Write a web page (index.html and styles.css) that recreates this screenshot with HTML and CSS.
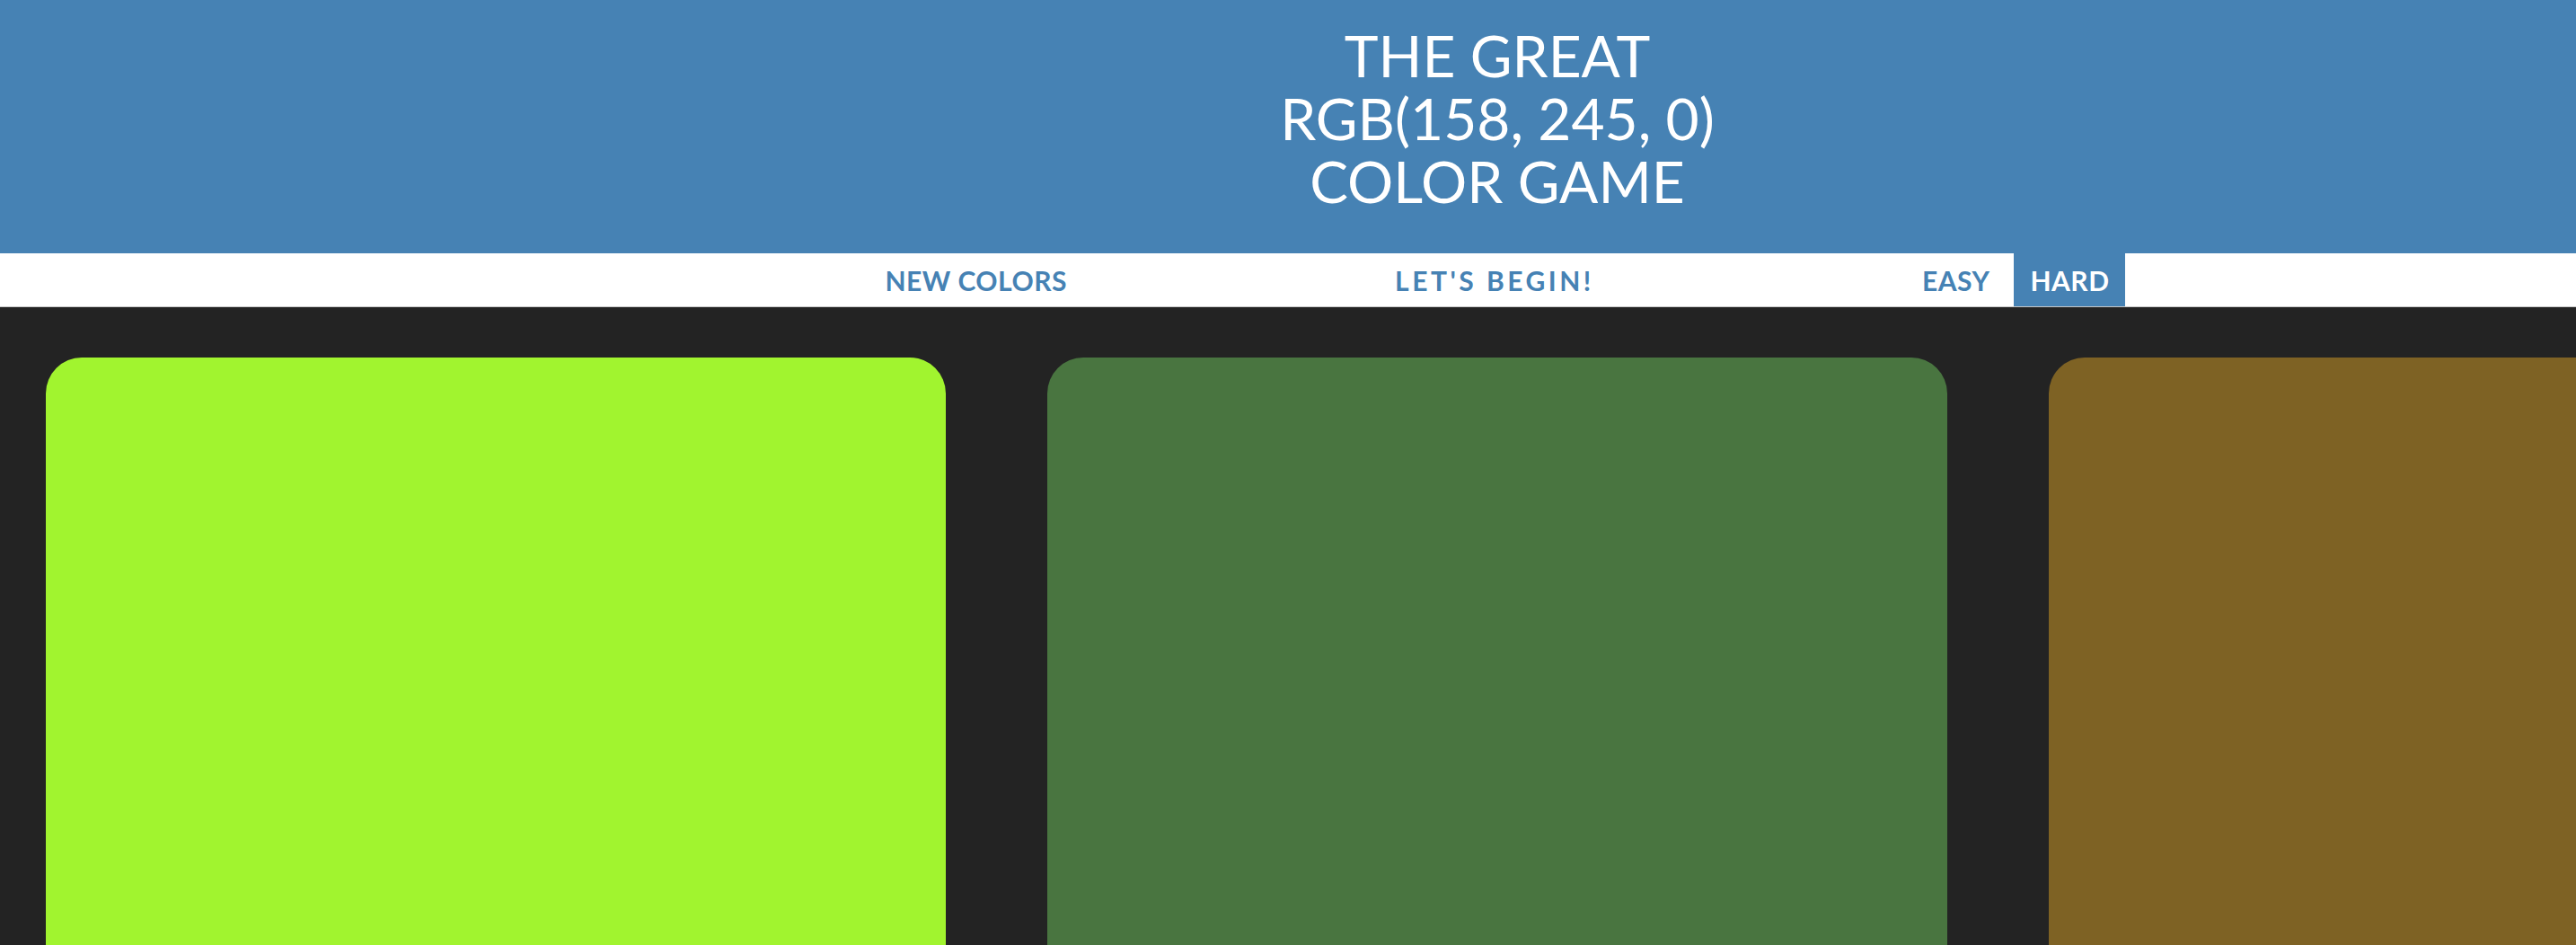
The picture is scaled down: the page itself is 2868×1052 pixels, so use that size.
FILE: index.html
```html
<!DOCTYPE html>
<html lang="en">
<head>
<meta charset="utf-8">
<title>Color Game</title>
<link rel="stylesheet" href="styles.css">
</head>
<body>
<div class="page">
  <h1 class="title">
    <span class="title-line">The Great</span>
    <span class="title-line">RGB(158, 245, 0)</span>
    <span class="title-line">Color Game</span>
  </h1>
  <nav class="stripe">
    <button class="btn">New Colors</button>
    <span class="message">Let's Begin!</span>
    <button class="btn">Easy</button>
    <button class="btn selected">Hard</button>
  </nav>
  <main class="board">
    <div class="square sq-1"></div>
    <div class="square sq-2"></div>
    <div class="square sq-3"></div>
  </main>
</div>
</body>
</html>
```
FILE: styles.css
```css
html, body {
  margin: 0;
  padding: 0;
  overflow: hidden;
  background: #232323;
}
body {
  font-family: Lato, "Open Sans", sans-serif;
  width: 2868px;
  height: 1052px;
}
.page {
  width: 3334px;
}
.title {
  margin: 0;
  background: #4682b4;
  color: #ffffff;
  font-weight: 400;
  font-size: 64px;
  line-height: 70px;
  text-transform: uppercase;
  text-align: center;
  height: 282px;
  box-sizing: border-box;
  padding-top: 27px;
  display: flex;
  flex-direction: column;
  align-items: center;
}
.title-line {
  display: block;
}
.stripe {
  background: #ffffff;
  height: 59px;
  border-bottom: 1px solid #c9c9c9;
  display: flex;
  justify-content: center;
  align-items: stretch;
}
.btn {
  border: none;
  background: none;
  margin: 0;
  padding: 0 18px;
  font-family: inherit;
  font-size: 30px;
  font-weight: 700;
  letter-spacing: 0.5px;
  text-transform: uppercase;
  color: #4682b4;
  height: 100%;
}
.btn + .btn {
  margin-left: 9px;
}
.selected {
  background: #4682b4;
  color: #ffffff;
}
.message {
  width: 900px;
  margin: 0 8px;
  display: flex;
  align-items: center;
  justify-content: center;
  font-size: 30px;
  font-weight: 700;
  letter-spacing: 3.5px;
  text-transform: uppercase;
  color: #4682b4;
}
.board {
  display: flex;
  justify-content: center;
  gap: 113px;
  padding-top: 56px;
}
.square {
  flex: 0 0 1002px;
  height: 1002px;
  border-radius: 40px;
}
.sq-1 { background: #a1f42f; }
.sq-2 { background: #497540; }
.sq-3 { background: #7e6224; }
```
